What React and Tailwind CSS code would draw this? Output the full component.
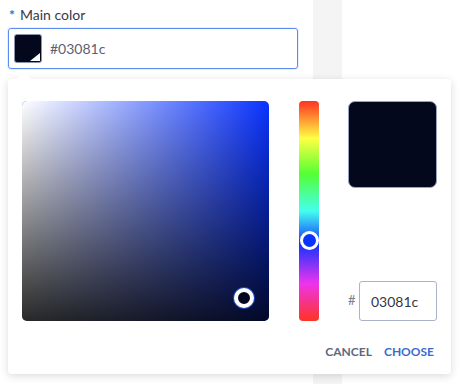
import React from "react";

const font = { fontFamily: "Lato, 'Noto Sans', sans-serif" };

export default function App() {
  return (
    <div className="relative w-[462px] h-[384px] bg-white overflow-hidden" style={font}>
      {/* background columns */}
      <div className="flex h-full">
        <div className="w-[313px] h-full flex flex-col pl-[8px] pt-[4px]">
          <div className="flex items-center h-[20px] text-[14px] text-[#363a48]">
            <span className="text-[#3a6bd1] mr-[5px] ml-[1px] font-bold">*</span>
            <span>Main color</span>
          </div>
          <div className="mt-[4px] w-[290px] h-[41px] rounded-[3px] border border-[#5b8def] shadow-[0_0_0_1px_rgba(91,141,239,0.15)] flex items-center pl-[5px]">
            <div className="relative w-[28px] h-[29px] rounded-[3px] bg-[#03081c] border border-[#8a93ad] overflow-hidden">
              <svg className="absolute right-[1px] bottom-[1px]" width="10" height="8" viewBox="0 0 10 8">
                <polygon points="0,8 10,8 10,0" fill="#ffffff" />
              </svg>
            </div>
            <span className="ml-[8px] text-[14px] text-[#5c6172]">#03081c</span>
          </div>
        </div>
        <div className="w-[29px] h-full bg-[#f4f4f5]" />
        <div className="flex-1" />
      </div>

      {/* popover arrow */}
      <div className="absolute left-[17px] top-[72px] w-0 h-0 border-l-[7px] border-r-[7px] border-b-[7px] border-l-transparent border-r-transparent border-b-white z-20" />

      {/* popover */}
      <div className="absolute left-[8px] top-[79px] w-[443px] h-[295px] bg-white rounded-[4px] shadow-[0_2px_8px_rgba(0,0,0,0.15)] z-10 flex flex-col pl-[14px] pr-[14px] pt-[22px]">
        <div className="flex">
          {/* saturation */}
          <div
            className="relative w-[247px] h-[220px] rounded-[5px] overflow-hidden"
            style={{ background: "#0a33ff" }}
          >
            <div className="absolute inset-0 bg-gradient-to-r from-white to-transparent" />
            <div className="absolute inset-0 bg-gradient-to-b from-transparent to-[rgba(0,0,0,0.84)]" />
            <div className="absolute left-[212px] top-[187px] w-[20px] h-[20px] rounded-full bg-[#03081c] border-[4px] border-white shadow-[0_0_0_1px_rgba(40,80,220,0.8)]" />
          </div>
          {/* hue */}
          <div
            className="relative ml-[30px] w-[20px] h-[220px] rounded-[4px]"
            style={{
              background:
                "linear-gradient(to bottom, #ff3322 0%, #ffff44 17%, #55ff33 33%, #44ffee 50%, #1133ff 65%, #ee33ee 83%, #ff3322 100%)",
            }}
          >
            <div className="absolute left-[0.5px] top-[130px] w-[19px] h-[19px] rounded-full bg-[#0b33ff] border-[3px] border-white" />
          </div>
          {/* right column */}
          <div className="ml-[29px] w-[89px] h-[220px] flex flex-col justify-between">
            <div className="w-[89px] h-[87px] rounded-[7px] bg-[#03081c] border border-[#9aa3bd]" />
            <div className="flex items-center">
              <span className="w-[11px] text-[13px] text-[#7a8090]">#</span>
              <div className="w-[78px] h-[40px] rounded-[3px] border border-[#aab3c8] flex items-center pl-[11px] text-[14px] text-[#333846]">
                03081c
              </div>
            </div>
          </div>
        </div>
        <div className="flex justify-end items-center mt-[20px] h-[22px] pr-[3px] gap-[12px] text-[12px] font-bold">
          <span className="text-[#5f6780]">CANCEL</span>
          <span className="text-[#3a6bd1]">CHOOSE</span>
        </div>
      </div>
    </div>
  );
}
